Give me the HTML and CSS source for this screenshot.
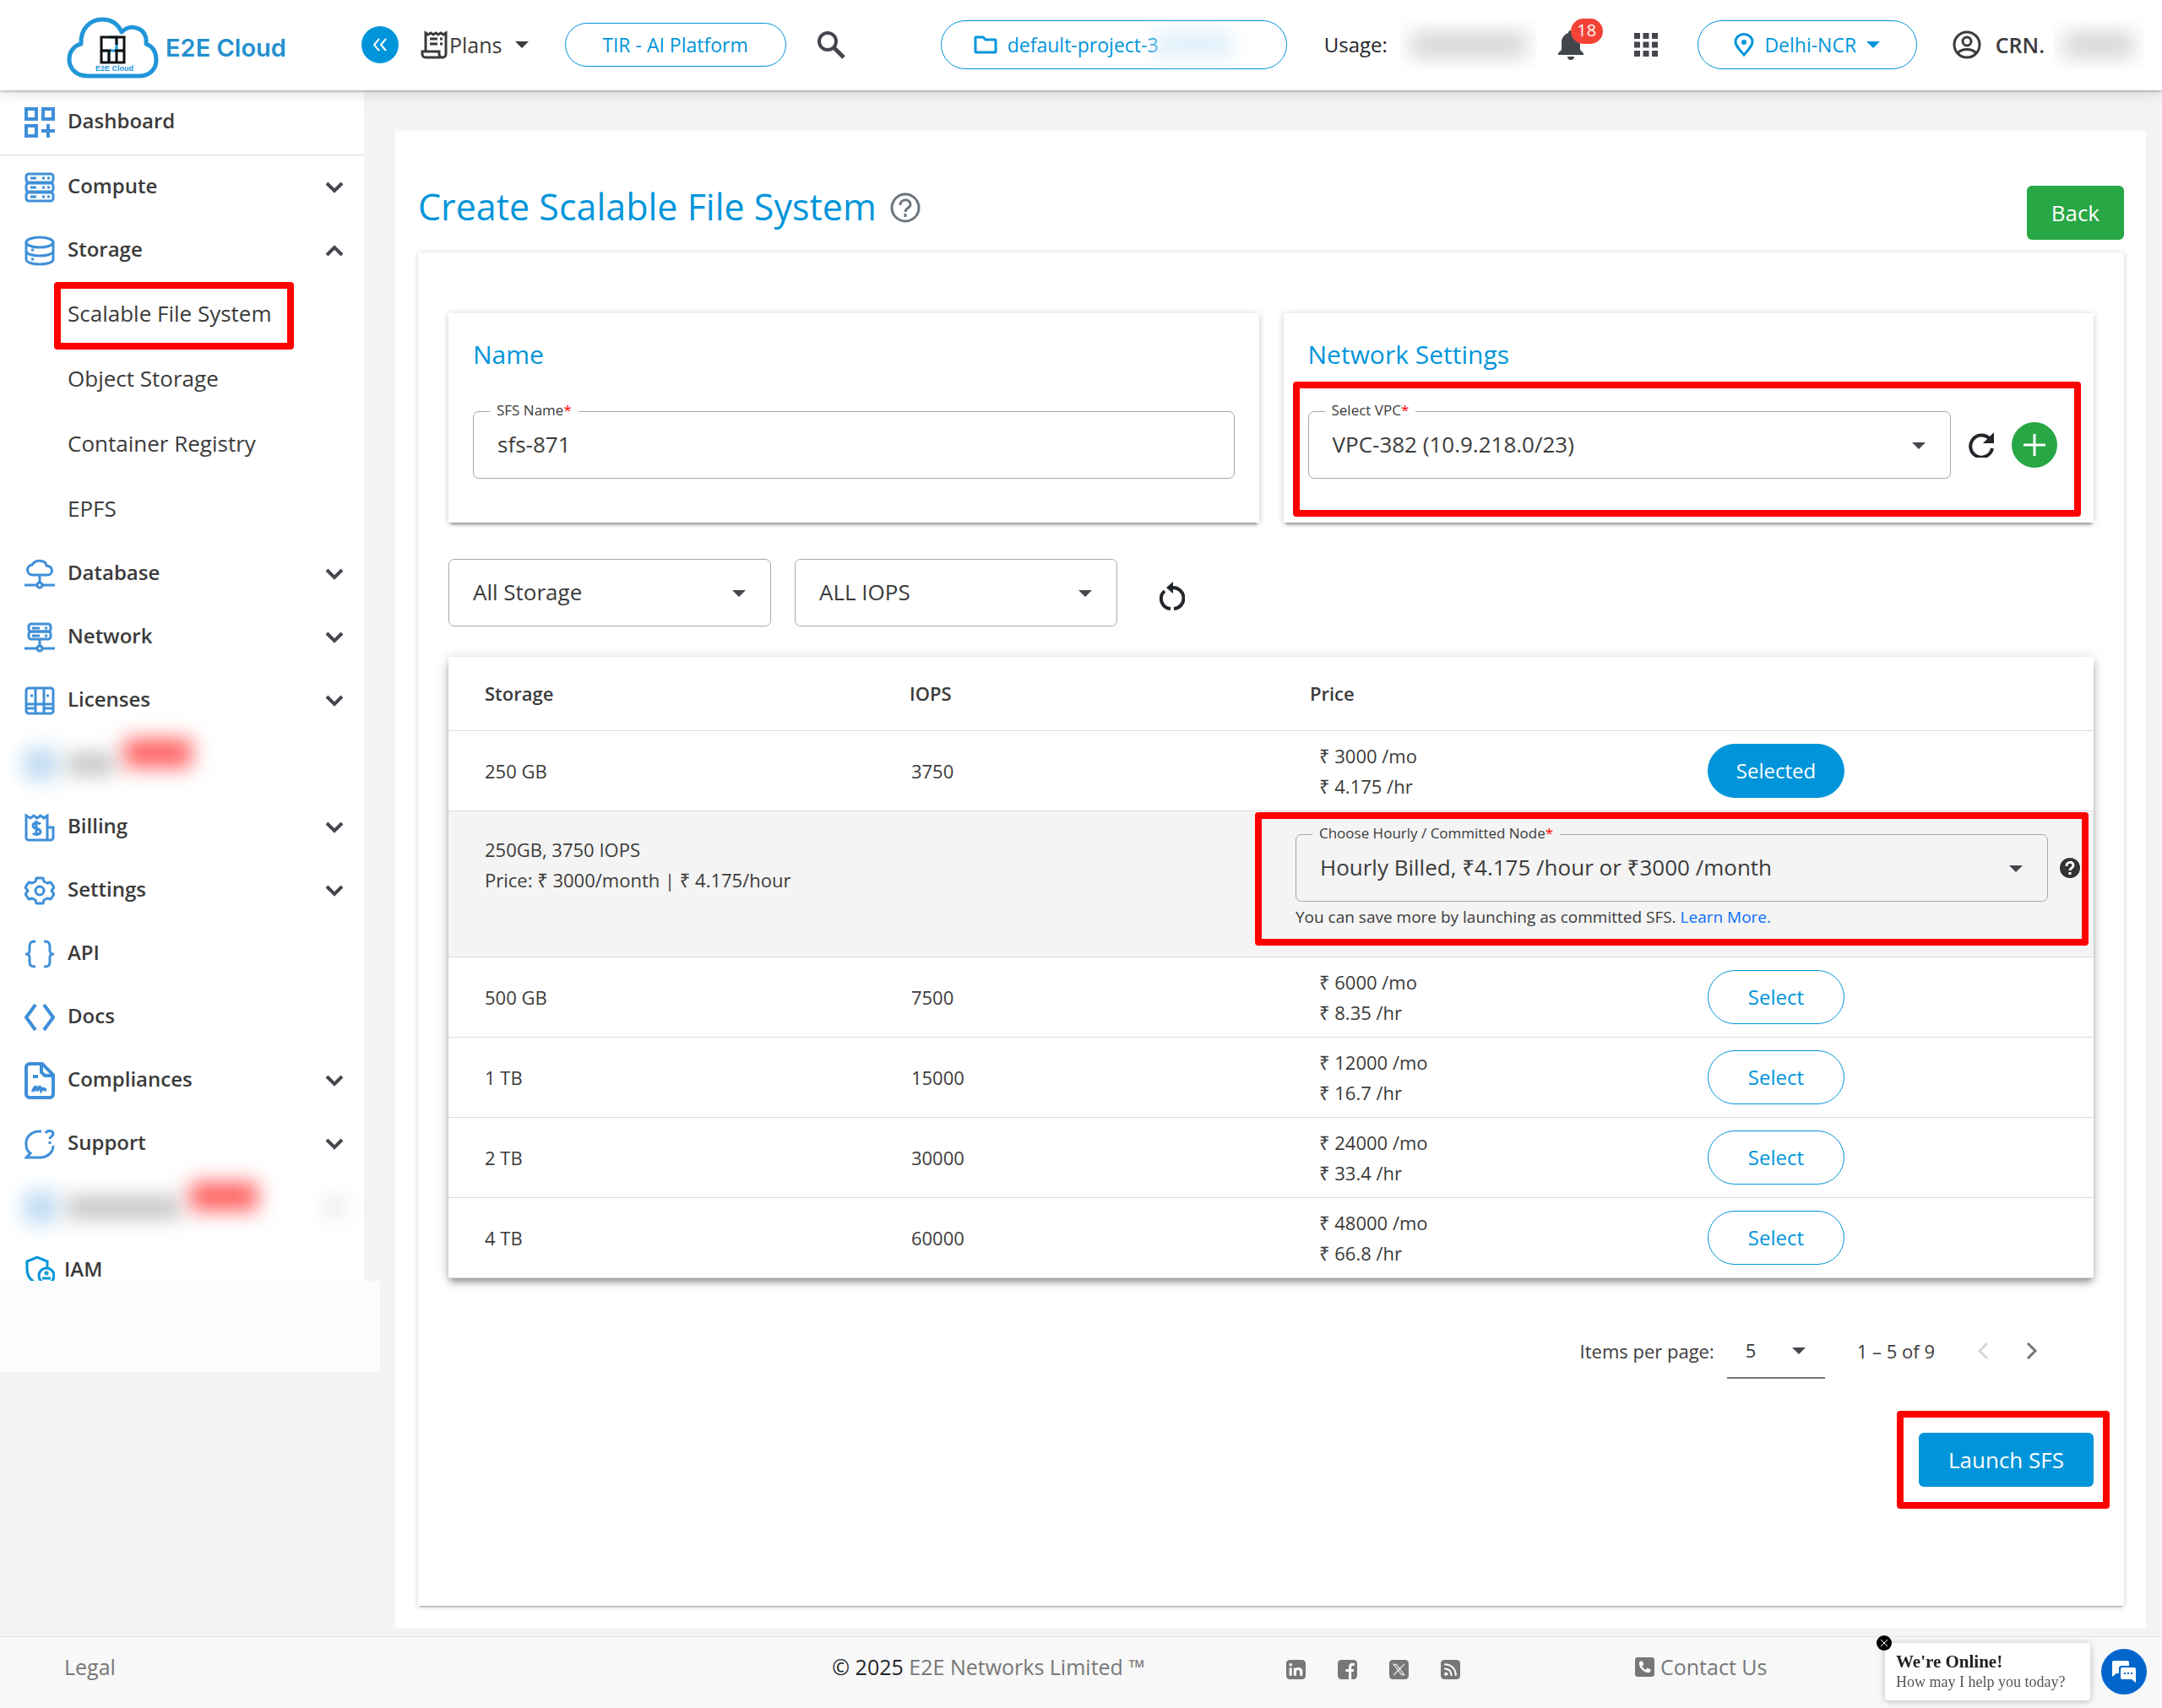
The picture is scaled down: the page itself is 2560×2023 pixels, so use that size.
FILE: index.html
```
<!DOCTYPE html>
<html lang="en">
<head>
  <meta charset="UTF-8" />
  <meta name="viewport" content="width=device-width, initial-scale=1" />
  <title>Create Scalable File System - E2E Cloud</title>
  <link rel="stylesheet" href="styles.css">
</head>
<body>

<svg class="sprite" aria-hidden="true">
  <symbol id="chevron" viewBox="0 0 22 14"><path d="M2 2l9 9 9-9" fill="none" stroke="currentColor" stroke-width="4"/></symbol>
  <symbol id="caret" viewBox="0 0 16 8"><path d="M0 0h16L8 8z" fill="currentColor"/></symbol>
</svg>

<header class="topbar">
  <a class="brand" href="#">
    <svg class="brand-cloud" viewBox="0 0 109 73" aria-hidden="true">
      <path d="M25 70C11 70 3 61 3 50c0-9 6-16 14-18C16 14 28 3 42 3c11 0 19 6 23 15 5-5 11-7 17-5 9 2 13 10 12 19 8 3 12 10 12 19 0 11-8 19-20 19z" fill="#fff" stroke="#2196d8" stroke-width="5" stroke-linejoin="round"/>
      <g fill="none" stroke-width="3">
        <path d="M50 24h9v16h-9v14M41 40h9M59 40h9" stroke="#2196d8"/>
        <path d="M41 24h27v30H41zM41 40h11M59 24v9M57 40h11M50 40v14M59 40v14" stroke="#111"/>
      </g>
      <text class="brand-tiny" x="34" y="64">E2E Cloud</text>
    </svg>
    <span class="brand-name">E2E Cloud</span>
  </a>
  <button class="collapse" aria-label="Collapse menu">
    <svg width="20" height="16" viewBox="0 0 20 16"><path d="M9 1L3 8l6 7M17 1l-6 7 6 7" fill="none" stroke="#fff" stroke-width="2"/></svg>
  </button>
  <button class="plans">
    <svg width="32" height="34" viewBox="0 0 32 34"><path d="M6 24V3l3 2 3-2 3 2 3-2 3 2 3-2 3 2 3-2v25a4 4 0 0 1-4 4H6a4 4 0 0 1-4-4v-3h20v3a4 4 0 0 0 4 4" fill="none" stroke="currentColor" stroke-width="3"/><path d="M11 10h9M11 16h9M23 10h3M23 16h3" stroke="currentColor" stroke-width="3"/></svg>
    <span>Plans</span>
    <svg class="caret"><use href="#caret"/></svg>
  </button>
  <button class="pill tir">TIR - AI Platform</button>
  <button class="icon-btn search" aria-label="Search">
    <svg width="34" height="34" viewBox="0 0 34 34"><circle cx="13" cy="13" r="10" fill="none" stroke="currentColor" stroke-width="4"/><path d="M20 20l12 12" stroke="currentColor" stroke-width="5"/></svg>
  </button>

  <div class="topbar-right">
    <button class="pill project">
      <svg width="28" height="22" viewBox="0 0 28 22"><path d="M3 2h8l3 3h11a1 1 0 0 1 1 1v13a1 1 0 0 1-1 1H3a1 1 0 0 1-1-1V3a1 1 0 0 1 1-1z" fill="none" stroke="currentColor" stroke-width="3"/></svg>
      <span>default-project-3</span>
      <i class="smudge smudge-project"></i>
    </button>
    <span class="usage">Usage:</span>
    <span class="smudge-box usage-box"><i class="smudge smudge-grey"></i></span>
    <button class="icon-btn bell" aria-label="Notifications">
      <svg width="32" height="38" viewBox="0 0 32 38"><path d="M16 2a3 3 0 0 1 3 3c5 2 8 6 8 11v9l4 4v2H1v-2l4-4v-9C5 11 8 7 13 5a3 3 0 0 1 3-3zM12 33h8a4 4 0 0 1-8 0z" fill="currentColor"/></svg>
      <span class="badge">18</span>
    </button>
    <button class="icon-btn apps" aria-label="Apps">
      <svg width="28" height="28" viewBox="0 0 28 28"><path d="M0 0h7v7H0zM10.500 0h7v7h-7zM21 0h7v7h-7zM0 10.500h7v7H0zM10.500 10.500h7v7h-7zM21 10.500h7v7h-7zM0 21h7v7H0zM10.500 21h7v7h-7zM21 21h7v7h-7z" fill="currentColor"/></svg>
    </button>
    <button class="pill region">
      <svg width="24" height="28" viewBox="0 0 24 28"><path d="M12 26C6 19 2 15 2 10.500a10 9 0 0 1 20 0C22 15 18 19 12 26z" fill="none" stroke="currentColor" stroke-width="3"/><circle cx="12" cy="11" r="3" fill="currentColor"/></svg>
      <span>Delhi-NCR</span>
      <svg class="caret"><use href="#caret"/></svg>
    </button>
    <a class="account" href="#">
      <svg width="34" height="34" viewBox="0 0 34 34"><g fill="none" stroke="currentColor" stroke-width="3"><circle cx="17" cy="17" r="15"/><circle cx="17" cy="13" r="5"/><path d="M6 27c5-6 17-6 22 0"/></g></svg>
      <span>CRN.</span>
    </a>
    <span class="smudge-box crn-box"><i class="smudge smudge-grey"></i></span>
  </div>
</header>

<div class="layout">
  <aside class="sidebar">
    <nav class="menu">
      <a class="menu-item first" href="#">
        <svg class="menu-icon" viewBox="0 0 36 36"><g fill="none" stroke="currentColor" stroke-width="4"><path d="M2 2h12v12H2zM22 2h12v12H22zM2 22h12v12H2zM28 20v16M20 28h16"/></g></svg>
        <span>Dashboard</span>
      </a>
      <a class="menu-item" href="#">
        <svg class="menu-icon" viewBox="0 0 36 36"><g fill="none" stroke="currentColor" stroke-width="3"><rect x="2" y="2" width="32" height="10" rx="3"/><rect x="2" y="13" width="32" height="10" rx="3"/><rect x="2" y="24" width="32" height="10" rx="3"/><path d="M7 7h7M7 18h7M7 29h7M21 7h3M21 18h3M21 29h3M27 7h3M27 18h3M27 29h3"/></g></svg>
        <span>Compute</span>
        <svg class="chevron"><use href="#chevron"/></svg>
      </a>
      <a class="menu-item" href="#">
        <svg class="menu-icon" viewBox="0 0 36 36"><g fill="none" stroke="currentColor" stroke-width="3"><ellipse cx="18" cy="8" rx="16" ry="6"/><path d="M2 8v20c0 8 32 8 32 0V8M2 18c0 8 32 8 32 0"/><path d="M8 17h3M8 28h3"/></g></svg>
        <span>Storage</span>
        <svg class="chevron up"><use href="#chevron"/></svg>
      </a>
      <div class="submenu">
        <a class="active" href="#">Scalable File System<i class="mark mark-menu"></i></a>
        <a href="#">Object Storage</a>
        <a href="#">Container Registry</a>
        <a href="#">EPFS</a>
      </div>
      <a class="menu-item" href="#">
        <svg class="menu-icon" viewBox="0 0 36 36"><g fill="none" stroke="currentColor" stroke-width="3"><path d="M10 19a6 6 0 0 1-1-12c4-7 16-6 17 1 9 1 8 11 1 11zM18 19v9M0 31h14M22 31h14"/><circle cx="18" cy="31" r="3"/></g></svg>
        <span>Database</span>
        <svg class="chevron"><use href="#chevron"/></svg>
      </a>
      <a class="menu-item" href="#">
        <svg class="menu-icon" viewBox="0 0 36 36"><g fill="none" stroke="currentColor" stroke-width="3"><rect x="5" y="2" width="26" height="9" rx="3"/><rect x="5" y="11" width="26" height="9" rx="3"/><path d="M9 7h9M9 16h9M24 7h3M24 16h3M18 20v8M0 31h14M22 31h14"/><circle cx="18" cy="31" r="3"/></g></svg>
        <span>Network</span>
        <svg class="chevron"><use href="#chevron"/></svg>
      </a>
      <a class="menu-item" href="#">
        <svg class="menu-icon" viewBox="0 0 36 36"><g fill="none" stroke="currentColor" stroke-width="3"><rect x="2" y="3" width="32" height="30" rx="3"/><path d="M13 3v30M23 3v30M2 22h32M2 27h11M23 27h11M7 12h3M26 12h3"/></g></svg>
        <span>Licenses</span>
        <svg class="chevron"><use href="#chevron"/></svg>
      </a>
      <div class="menu-item hidden-item">
        <i class="smudge smudge-icon"></i><i class="smudge smudge-text"></i><i class="smudge smudge-red"></i>
      </div>
      <a class="menu-item" href="#">
        <svg class="menu-icon" viewBox="0 0 36 36"><g fill="none" stroke="currentColor" stroke-width="3"><path d="M2 30V4l5 3 4-3 4 3 4-3 4 3 4-3v29M27 18h7v12a3 3 0 0 1-3 3H5a3 3 0 0 1-3-3"/><path d="M19 14c-2-2-9-2-9 2 0 5 9 2 9 7 0 4-7 4-9 2M14 10v18"/></g></svg>
        <span>Billing</span>
        <svg class="chevron"><use href="#chevron"/></svg>
      </a>
      <a class="menu-item" href="#">
        <svg class="menu-icon" viewBox="0 0 36 36"><g fill="none" stroke="currentColor" stroke-width="3" stroke-linejoin="round"><path d="M14 3h8l1 4 4 2 4-1 4 6-3 4 3 4-4 6-4-1-4 2-1 4h-8l-1-4-4-2-4 1-4-6 3-4-3-4 4-6 4 1 4-2z"/><circle cx="18" cy="18" r="5"/></g></svg>
        <span>Settings</span>
        <svg class="chevron"><use href="#chevron"/></svg>
      </a>
      <a class="menu-item" href="#">
        <svg class="menu-icon" viewBox="0 0 36 36"><path d="M13 3c-5 0-7 1-7 6v5c0 3-1 4-5 4 4 0 5 1 5 4v5c0 5 2 6 7 6M23 3c5 0 7 1 7 6v5c0 3 1 4 5 4-4 0-5 1-5 4v5c0 5-2 6-7 6" fill="none" stroke="currentColor" stroke-width="3"/></svg>
        <span>API</span>
      </a>
      <a class="menu-item" href="#">
        <svg class="menu-icon" viewBox="0 0 36 36"><path d="M13 3L2 18l11 15M23 3l11 15-11 15" fill="none" stroke="currentColor" stroke-width="4"/></svg>
        <span>Docs</span>
      </a>
      <a class="menu-item" href="#">
        <svg class="menu-icon tall" viewBox="0 0 36 44"><g fill="none" stroke="currentColor" stroke-width="4"><path d="M6 2h15l13 13v23a4 4 0 0 1-4 4H6a4 4 0 0 1-4-4V6a4 4 0 0 1 4-4zM20 3v9l4 4h9M10 17h6"/><path d="M10 35c2-7 4-7 5-1 2-6 4-5 5-1 2-3 4 0 6 0"/></g></svg>
        <span>Compliances</span>
        <svg class="chevron"><use href="#chevron"/></svg>
      </a>
      <a class="menu-item" href="#">
        <svg class="menu-icon" viewBox="0 0 36 36"><g fill="none" stroke="currentColor" stroke-width="3"><path d="M20 3C7 2 1 11 2 19c0 5 2 8 5 10l-5 5h16c9 0 16-6 16-14"/><path d="M25 5c2-4 9-3 9 1 0 3-4 3-4 6M30 15v3"/></g></svg>
        <span>Support</span>
        <svg class="chevron"><use href="#chevron"/></svg>
      </a>
      <div class="menu-item hidden-item wide">
        <i class="smudge smudge-icon"></i><i class="smudge smudge-text"></i><i class="smudge smudge-red"></i><i class="smudge smudge-end"></i>
      </div>
      <a class="menu-item iam" href="#">
        <svg class="menu-icon" viewBox="0 0 36 36"><g fill="none" stroke="currentColor" stroke-width="3"><path d="M27 14V7L15 2 3 7v9c0 8 4 14 12 17"/><circle cx="26" cy="24" r="9"/><circle cx="26" cy="21" r="1"/><path d="M21 27h10"/></g></svg>
        <span>IAM</span>
      </a>
    </nav>
    <div class="sidebar-end"></div>
  </aside>

  <main class="content">
    <div class="title-row">
      <h1>Create Scalable File System</h1>
      <svg class="help" viewBox="0 0 36 36"><g fill="none" stroke="currentColor" stroke-width="3"><circle cx="18" cy="18" r="16"/><path d="M12 15c0-8 12-8 12-1 0 5-6 4-6 9M18 25v4"/></g></svg>
      <button class="btn btn-green">Back</button>
    </div>

    <div class="panel">
      <div class="cards">
        <section class="card">
          <h2>Name</h2>
          <div class="field">
            <label for="sfsName">SFS Name<b>*</b></label>
            <input id="sfsName" type="text" value="sfs-871">
          </div>
        </section>
        <section class="card">
          <h2>Network Settings</h2>
          <div class="vpc-row">
            <div class="field">
              <label for="vpc">Select VPC<b>*</b></label>
              <select id="vpc"><option>VPC-382 (10.9.218.0/23)</option></select>
              <svg class="caret"><use href="#caret"/></svg>
            </div>
            <button class="icon-btn" aria-label="Refresh">
              <svg width="30" height="30" viewBox="0 0 30 30"><path d="M25 8A13 13 0 1 0 28 19" fill="none" stroke="currentColor" stroke-width="4"/><path d="M30 0v13H17z" fill="currentColor"/></svg>
            </button>
            <button class="add-btn" aria-label="Add VPC">
              <svg width="26" height="26" viewBox="0 0 26 26"><path d="M13 0v26M0 13h26" stroke="#fff" stroke-width="3"/></svg>
            </button>
            <i class="mark mark-vpc"></i>
          </div>
        </section>
      </div>

      <div class="filters">
        <div class="field">
          <select aria-label="Storage"><option>All Storage</option></select>
          <svg class="caret"><use href="#caret"/></svg>
        </div>
        <div class="field">
          <select aria-label="IOPS"><option>ALL IOPS</option></select>
          <svg class="caret"><use href="#caret"/></svg>
        </div>
        <button class="icon-btn reset" aria-label="Reset filters">
          <svg width="30" height="34" viewBox="0 0 30 34"><path d="M15 7a12 12 0 0 1 2 25M13 32A12 12 0 0 1 6 11" fill="none" stroke="currentColor" stroke-width="4"/><path d="M16 0v14L8 7z" fill="currentColor"/></svg>
        </button>
      </div>

      <table class="plan-table">
        <colgroup><col class="col-storage"><col><col><col></colgroup>
        <thead>
          <tr><th>Storage</th><th>IOPS</th><th>Price</th><th></th></tr>
        </thead>
        <tbody>
          <tr>
            <td>250 GB</td><td>3750</td>
            <td class="price">₹ 3000 /mo<br>₹ 4.175 /hr</td>
            <td><button class="pick picked">Selected</button></td>
          </tr>
          <tr class="detail">
            <td colspan="2">250GB, 3750 IOPS<br>Price: ₹ 3000/month | ₹ 4.175/hour</td>
            <td colspan="2">
              <div class="billing">
                <div class="billing-row">
                  <div class="field">
                    <label for="node">Choose Hourly / Committed Node<b>*</b></label>
                    <select id="node"><option>Hourly Billed, ₹4.175 /hour or ₹3000 /month</option></select>
                    <svg class="caret"><use href="#caret"/></svg>
                  </div>
                  <svg class="help-dark" viewBox="0 0 24 24"><circle cx="12" cy="12" r="12" fill="#333"/><path d="M8 10c0-6 8-6 8-1 0 3-4 3-4 6M12 17v3" fill="none" stroke="#fff" stroke-width="3"/></svg>
                </div>
                <p>You can save more by launching as committed SFS. <a href="#">Learn More.</a></p>
                <i class="mark mark-billing"></i>
              </div>
            </td>
          </tr>
          <tr>
            <td>500 GB</td><td>7500</td>
            <td class="price">₹ 6000 /mo<br>₹ 8.35 /hr</td>
            <td><button class="pick">Select</button></td>
          </tr>
          <tr>
            <td>1 TB</td><td>15000</td>
            <td class="price">₹ 12000 /mo<br>₹ 16.7 /hr</td>
            <td><button class="pick">Select</button></td>
          </tr>
          <tr>
            <td>2 TB</td><td>30000</td>
            <td class="price">₹ 24000 /mo<br>₹ 33.4 /hr</td>
            <td><button class="pick">Select</button></td>
          </tr>
          <tr>
            <td>4 TB</td><td>60000</td>
            <td class="price">₹ 48000 /mo<br>₹ 66.8 /hr</td>
            <td><button class="pick">Select</button></td>
          </tr>
        </tbody>
      </table>

      <div class="paginator">
        <label for="pageSize">Items per page:</label>
        <div class="page-size">
          <select id="pageSize"><option>5</option></select>
          <svg class="caret"><use href="#caret"/></svg>
        </div>
        <span class="range">1 – 5 of 9</span>
        <button class="icon-btn prev" aria-label="Previous page" disabled>
          <svg width="14" height="22" viewBox="0 0 14 22"><path d="M12 2l-9 9 9 9" fill="none" stroke="currentColor" stroke-width="3"/></svg>
        </button>
        <button class="icon-btn next" aria-label="Next page">
          <svg width="14" height="22" viewBox="0 0 14 22"><path d="M2 2l9 9-9 9" fill="none" stroke="currentColor" stroke-width="3"/></svg>
        </button>
      </div>

      <div class="launch-row">
        <div class="launch">
          <button class="btn btn-blue">Launch SFS</button>
          <i class="mark mark-launch"></i>
        </div>
      </div>
    </div>
  </main>
</div>

<footer class="footer">
  <a href="#">Legal</a>
  <span><span class="year">© 2025</span> E2E Networks Limited ™</span>
  <div class="social">
    <a href="#" aria-label="LinkedIn"><svg viewBox="0 0 22 22"><rect width="22" height="22" rx="4" fill="#777"/><path d="M5 9v9M10 18V9M10 13c0-4 7-4 7 0v5M5 4v3" fill="none" stroke="#fff" stroke-width="3"/></svg></a>
    <a href="#" aria-label="Facebook"><svg viewBox="0 0 22 22"><rect width="22" height="22" rx="4" fill="#777"/><path d="M19 5h-2c-2 0-3 1-3 3v14M9 12h9" fill="none" stroke="#fff" stroke-width="3"/></svg></a>
    <a href="#" aria-label="X"><svg viewBox="0 0 22 22"><rect width="22" height="22" rx="4" fill="#777"/><path d="M5 5h3l9 12h-3zM17 5L5 17" fill="none" stroke="#fff" stroke-width="1"/></svg></a>
    <a href="#" aria-label="RSS"><svg viewBox="0 0 22 22"><rect width="22" height="22" rx="4" fill="#777"/><path d="M4 10c5 0 8 3 8 8M4 5c8 0 13 5 13 13" fill="none" stroke="#fff" stroke-width="2"/><circle cx="6" cy="16" r="2" fill="#fff"/></svg></a>
  </div>
  <a class="contact" href="#">
    <svg viewBox="0 0 22 22"><rect width="22" height="22" rx="3" fill="#777"/><path d="M5 5l3-1 2 4-2 2c1 2 2 3 4 4l2-2 4 2-1 3c-6 2-14-6-12-12z" fill="#fff"/></svg>
    <span>Contact Us</span>
  </a>
</footer>

<div class="chat">
  <div class="chat-bubble">
    <strong>We're Online!</strong>
    <span>How may I help you today?</span>
    <button class="chat-close" aria-label="Close chat message">
      <svg width="8" height="8" viewBox="0 0 8 8"><path d="M0 0l8 8M8 0L0 8" stroke="#fff"/></svg>
    </button>
  </div>
  <button class="chat-btn" aria-label="Open chat">
    <svg width="28" height="26" viewBox="0 0 28 26"><path d="M2 0h16a2 2 0 0 1 2 2v4h-9a3 3 0 0 0-3 3v6H5l-5 4V2a2 2 0 0 1 2-2z" fill="#fff"/><path d="M12 8h14a2 2 0 0 1 2 2v16l-5-4H12a2 2 0 0 1-2-2V10a2 2 0 0 1 2-2z" fill="#fff"/><path d="M14 15h2M18 15h2M22 15h2" stroke="#0066cc" stroke-width="2"/></svg>
  </button>
</div>

</body>
</html>
```

FILE: styles.css
```
* {
  box-sizing: border-box;
}

body {
  margin: 0;
  min-height: 100vh;
  display: flex;
  flex-direction: column;
  font-family: 'Open Sans', 'Noto Sans', sans-serif;
  font-size: 24px;
  background-color: #f4f4f4;
  color: #3b3b3b;
}

a {
  color: inherit;
  text-decoration: none;
}

button,
input,
select {
  font: inherit;
  color: inherit;
}

button {
  border: none;
  padding: 0;
  background: none;
  cursor: pointer;
}

svg {
  display: block;
  flex-shrink: 0;
}

.sprite {
  position: absolute;
  width: 0;
  height: 0;
}

.caret {
  width: 16px;
  height: 8px;
}

/* red outlines drawn over the page */
.mark {
  position: absolute;
  border: 8px solid #ff0000;
  border-radius: 4px;
  pointer-events: none;
}

/* masked text */
.smudge {
  display: block;
  filter: blur(12px);
}

.smudge-box {
  overflow: hidden;
  padding: 16px 12px;
}

.smudge-grey {
  height: 28px;
  background-color: #d2d2d2;
}

/* top bar */
.topbar {
  position: relative;
  z-index: 2;
  display: flex;
  align-items: center;
  height: 107px;
  padding: 0 21px 2px 0;
  background-color: white;
  box-shadow: 0 1px 3px rgba(0, 0, 0, 0.3), 0 4px 16px rgba(0, 0, 0, 0.12);
}

.brand {
  display: flex;
  align-items: center;
  gap: 8px;
  width: 428px;
  padding: 8px 0 0 79px;
}

.brand-cloud {
  width: 109px;
  height: 73px;
}

.brand-tiny {
  font: bold 9px 'Liberation Sans', sans-serif;
  fill: #2196d8;
}

.brand-name {
  font-family: Inter, sans-serif;
  font-size: 29px;
  font-weight: 600;
  color: #2490d0;
}

.collapse,
.add-btn,
.chat-btn {
  display: flex;
  align-items: center;
  justify-content: center;
  border-radius: 50%;
}

.collapse {
  width: 44px;
  height: 44px;
  background-color: #0095da;
}

.plans {
  display: flex;
  align-items: center;
  gap: 2px;
  margin-left: 26px;
  font-size: 25px;
}

.plans .caret {
  margin-left: 13px;
}

.pill {
  display: flex;
  align-items: center;
  justify-content: center;
  height: 58px;
  border: 1px solid #0095da;
  border-radius: 29px;
  color: #0095da;
  font-size: 23px;
}

.tir {
  width: 262px;
  height: 52px;
  margin-left: 43px;
}

.icon-btn {
  position: relative;
  color: #222529;
}

.search {
  margin-left: 36px;
  color: #43474d;
}

.topbar-right {
  display: flex;
  align-items: center;
  margin-left: auto;
}

.project {
  justify-content: flex-start;
  gap: 12px;
  width: 410px;
  padding-left: 38px;
}

.smudge-project {
  width: 90px;
  height: 28px;
  margin-left: -16px;
  background-color: #dceefa;
}

.usage {
  width: 90px;
  margin-left: 44px;
  color: #222529;
}

.usage-box {
  width: 162px;
}

.bell {
  margin-left: 24px;
  color: #43474d;
}

.badge {
  position: absolute;
  top: -12px;
  left: 16px;
  width: 38px;
  height: 30px;
  border-radius: 15px;
  background-color: #f44336;
  color: white;
  font-size: 20px;
  line-height: 28px;
}

.apps {
  margin-left: 59px;
  color: #43474d;
}

.region {
  gap: 12px;
  width: 260px;
  margin-left: 47px;
}

.account {
  display: flex;
  align-items: center;
  gap: 17px;
  margin-left: 42px;
  font-size: 25px;
  font-weight: 600;
}

.crn-box {
  width: 108px;
  margin-left: 10px;
}

/* sidebar */
.layout {
  display: flex;
  flex: 1;
}

.sidebar {
  width: 450px;
  flex-shrink: 0;
}

.menu {
  height: 1410px;
  margin-right: 19px;
  overflow: hidden;
  background-color: white;
}

.sidebar-end {
  height: 108px;
  background-color: #fbfcfe;
}

.menu-item {
  display: flex;
  align-items: center;
  gap: 15px;
  height: 75px;
  padding: 0 24px 0 29px;
  font-weight: 600;
  line-height: 24px;
}

.menu-item span {
  padding-bottom: 4px;
}

.menu-item.first {
  height: 77px;
  border-bottom: 1px solid #dcdcdc;
}

.menu-icon {
  width: 36px;
  height: 36px;
  color: #3f8fd8;
}

.menu-icon.tall {
  height: 44px;
}

.chevron {
  width: 22px;
  height: 14px;
  margin-left: auto;
  color: #43474d;
}

.chevron.up {
  transform: rotate(180deg);
}

.submenu a {
  position: relative;
  display: block;
  padding: 0 0 3px 80px;
  font-size: 26px;
  line-height: 74px;
}

.mark-menu {
  top: 0;
  left: 64px;
  width: 284px;
  height: 80px;
}

.iam {
  gap: 11px;
}

.iam .menu-icon {
  color: #0095da;
}

.hidden-item {
  gap: 12px;
}

.smudge-icon {
  width: 38px;
  height: 36px;
  background-color: #b8d8f2;
}

.smudge-text {
  width: 56px;
  height: 24px;
  background-color: #bdbdbd;
}

.smudge-red {
  width: 80px;
  height: 34px;
  margin-bottom: 26px;
  background-color: #ff5f5f;
}

.wide .smudge-text {
  width: 134px;
}

.smudge-end {
  width: 22px;
  height: 20px;
  margin-left: auto;
  background-color: #e2e2e2;
}

/* content */
.content {
  flex: 1;
  margin: 48px 19px 10px 18px;
  padding: 65px 26px 26px 27px;
  background-color: white;
}

.title-row {
  display: flex;
  align-items: flex-start;
  gap: 16px;
  margin-bottom: 15px;
}

h1,
h2 {
  margin: 0;
  font-weight: 400;
  color: #0095da;
}

h1 {
  font-size: 43px;
  line-height: 50px;
}

h2 {
  margin-bottom: 47px;
  font-size: 30px;
  line-height: 40px;
}

.help {
  width: 36px;
  height: 36px;
  margin-top: 8px;
  color: #6c757d;
}

.btn {
  height: 64px;
  padding: 0 29px;
  border-radius: 6px;
  color: white;
  font-size: 26px;
}

.btn-green {
  margin-left: auto;
  background-color: #28a745;
}

.btn-blue {
  min-width: 207px;
  background-color: #0095da;
}

.panel {
  padding: 72px 36px 141px;
  box-shadow: 0 3px 2px -2px rgba(0, 0, 0, 0.3), 0 1px 6px rgba(0, 0, 0, 0.2);
}

.cards {
  display: flex;
  gap: 29px;
}

.card {
  flex: 1;
  padding: 29px 29px 52px;
  box-shadow: 0 4px 3px -2px rgba(0, 0, 0, 0.35), 0 1px 8px rgba(0, 0, 0, 0.2);
}

.field {
  position: relative;
}

.field label {
  position: absolute;
  top: -12px;
  left: 20px;
  padding: 0 8px;
  background-color: white;
  font-size: 17px;
  line-height: 22px;
}

.field b {
  color: #ff0000;
  font-weight: 400;
}

.field input,
.field select {
  display: block;
  width: 100%;
  height: 80px;
  padding: 0 28px 2px;
  border: 1px solid #9aabb3;
  border-radius: 7px;
  background: none;
  appearance: none;
  font-size: 26px;
}

.field .caret {
  position: absolute;
  top: 37px;
  right: 30px;
  color: #43474d;
}

.vpc-row {
  position: relative;
  display: flex;
  align-items: center;
  gap: 21px;
  padding-right: 14px;
}

.vpc-row .field {
  flex: 1;
}

.add-btn {
  width: 54px;
  height: 54px;
  background-color: #28a745;
}

.mark-vpc {
  top: -35px;
  right: -14px;
  bottom: -45px;
  left: -18px;
}

.filters {
  display: flex;
  align-items: center;
  gap: 28px;
  margin: 43px 0 36px;
}

.filters .field {
  width: 382px;
}

.reset {
  margin-left: 22px;
  padding-top: 8px;
}

/* plans table */
.plan-table {
  width: 100%;
  table-layout: fixed;
  border-collapse: collapse;
  font-size: 22px;
  line-height: 36px;
  box-shadow: 0 6px 8px -2px rgba(0, 0, 0, 0.35), 0 2px 14px rgba(0, 0, 0, 0.2);
}

.col-storage {
  width: 27%;
}

.plan-table th {
  height: 87px;
  padding: 0 20px;
  border-bottom: 1px solid #dcdcdc;
  font-weight: 600;
  text-align: left;
}

.plan-table td {
  height: 95px;
  padding: 0 18px 0 22px;
  border-bottom: 1px solid #dcdcdc;
}

.plan-table th:first-child,
.plan-table td:first-child {
  padding-left: 43px;
}

.plan-table .price {
  padding-left: 31px;
}

.pick {
  width: 162px;
  height: 64px;
  margin-left: -5px;
  border: 1px solid #0095da;
  border-radius: 32px;
  color: #0095da;
  font-size: 24px;
}

.picked {
  background-color: #0095da;
  color: white;
}

.plan-table .detail td {
  height: 173px;
  padding: 27px 16px 0 3px;
  background-color: #f4f4f4;
  vertical-align: top;
}

.plan-table .detail td:first-child {
  padding-left: 43px;
}

.billing {
  position: relative;
}

.billing-row {
  display: flex;
  align-items: center;
  gap: 14px;
}

.billing .field {
  flex: 1;
}

.billing .field label {
  background-color: #f4f4f4;
}

.help-dark {
  width: 24px;
  height: 24px;
}

.billing p {
  margin: 6px 0 0;
  font-size: 19px;
  line-height: 24px;
}

.billing p a {
  color: #0d6efd;
}

.mark-billing {
  top: -26px;
  right: -10px;
  bottom: -22px;
  left: -48px;
}

.paginator {
  display: flex;
  align-items: center;
  justify-content: flex-end;
  margin-top: 53px;
  padding-right: 66px;
  font-size: 22px;
}

.page-size {
  position: relative;
  width: 116px;
  margin: 0 38px 0 15px;
}

.page-size select {
  display: block;
  width: 100%;
  height: 66px;
  padding: 0 22px;
  border: none;
  border-bottom: 2px solid #6c757d;
  background: none;
  appearance: none;
}

.page-size .caret {
  position: absolute;
  top: 29px;
  right: 23px;
  color: #43474d;
}

.prev {
  margin: 0 44px 0 50px;
  color: #d5d5d5;
}

.next {
  color: #757575;
}

.launch-row {
  display: flex;
  justify-content: flex-end;
  margin-top: 64px;
}

.launch {
  position: relative;
}

.mark-launch {
  top: -26px;
  right: -19px;
  bottom: -26px;
  left: -26px;
}

/* footer */
.footer {
  display: grid;
  grid-template-columns: 22fr 13fr 10fr 15fr;
  align-items: center;
  height: 85px;
  padding: 0 4px 14px 76px;
  border-top: 1px solid #e4e4e4;
  background-color: #f8f8f8;
  color: #777;
  font-size: 25px;
}

.year {
  color: #222529;
}

.social,
.contact {
  display: flex;
  align-items: center;
}

.social {
  gap: 38px;
  padding-top: 7px;
}

.contact {
  gap: 7px;
}

.footer svg {
  width: 23px;
  height: 23px;
}

/* chat widget */
.chat {
  position: fixed;
  right: 18px;
  bottom: 9px;
  display: flex;
  align-items: center;
  gap: 13px;
}

.chat-bubble {
  position: relative;
  width: 243px;
  padding: 10px 13px;
  border-radius: 4px;
  background-color: white;
  box-shadow: 0 1px 8px rgba(0, 0, 0, 0.25);
  font-family: 'Liberation Serif', serif;
  color: #555;
  font-size: 18px;
  line-height: 24px;
}

.chat-bubble strong {
  display: block;
  color: #222;
  font-size: 21px;
}

.chat-close {
  position: absolute;
  top: -9px;
  left: -10px;
  display: flex;
  align-items: center;
  justify-content: center;
  width: 18px;
  height: 18px;
  border-radius: 50%;
  background-color: black;
}

.chat-btn {
  width: 54px;
  height: 54px;
  background-color: #0066cc;
}
```
